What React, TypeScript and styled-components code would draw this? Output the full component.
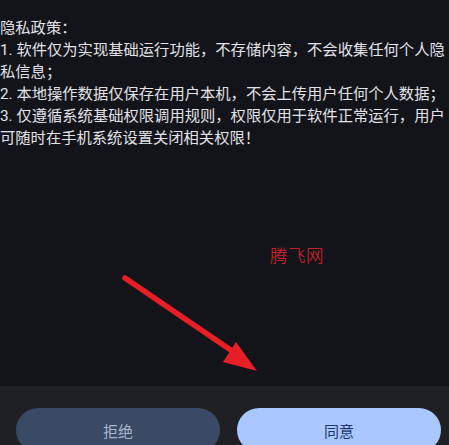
import React from "react";
import styled, { createGlobalStyle } from "styled-components";

const GlobalStyle = createGlobalStyle`
  html, body {
    margin: 0;
    padding: 0;
    background: #131419;
    overflow: hidden;
  }
  * { box-sizing: border-box; }
`;

const Screen = styled.div`
  position: relative;
  height: 100vh;
  overflow: hidden;
  display: flex;
  flex-direction: column;
  background: #131419;
  font-family: Roboto, "Noto Sans CJK SC", sans-serif;
`;

const Content = styled.div`
  height: 386px;
  flex-shrink: 0;
  padding: 17px 0 0 0;
`;

const Policy = styled.div`
  color: #e2e2e8;
  font-size: 15.3px;
  line-height: 22px;
  white-space: pre-wrap;
  word-break: break-all;
`;

const Watermark = styled.div`
  position: absolute;
  left: 270px;
  top: 244px;
  color: #e0242c;
  font-family: "Noto Sans CJK SC", sans-serif;
  font-weight: 300;
  font-size: 17.5px;
  line-height: 22px;
  letter-spacing: 0.5px;
`;

const Arrow = styled.svg`
  position: absolute;
  left: 0;
  top: 0;
  pointer-events: none;
`;

const Footer = styled.div`
  flex-shrink: 0;
  background: #1f2024;
  display: flex;
  gap: 17px;
  padding: 22px 8px 22px 16px;
`;

const Button = styled.button<{ $primary?: boolean }>`
  flex: 1;
  height: 44px;
  border: none;
  border-radius: 22px;
  font-family: Roboto, "Noto Sans CJK SC", sans-serif;
  font-size: 15px;
  background: ${(p) => (p.$primary ? "#abc7ff" : "#3a4964")};
  color: ${(p) => (p.$primary ? "#1a3868" : "#a9b6cf")};
  padding: 0;
`;

const lines = [
  "隐私政策：",
  "1. 软件仅为实现基础运行功能，不存储内容，不会收集任何个人隐私信息；",
  "2. 本地操作数据仅保存在用户本机，不会上传用户任何个人数据；",
  "3. 仅遵循系统基础权限调用规则，权限仅用于软件正常运行，用户可随时在手机系统设置关闭相关权限！",
];

export default function App() {
  return (
    <>
      <GlobalStyle />
      <Screen>
        <Content>
          <Policy>{lines.join("\n")}</Policy>
        </Content>
        <Footer>
          <Button>拒绝</Button>
          <Button $primary>同意</Button>
        </Footer>
        <Watermark>腾飞网</Watermark>
        <Arrow width="449" height="445" viewBox="0 0 449 445">
          <line
            x1="125"
            y1="278"
            x2="238"
            y2="355"
            stroke="#e81e27"
            strokeWidth="5.5"
            strokeLinecap="round"
          />
          <polygon points="257,371 223,362 236,342" fill="#e81e27" />
        </Arrow>
      </Screen>
    </>
  );
}
